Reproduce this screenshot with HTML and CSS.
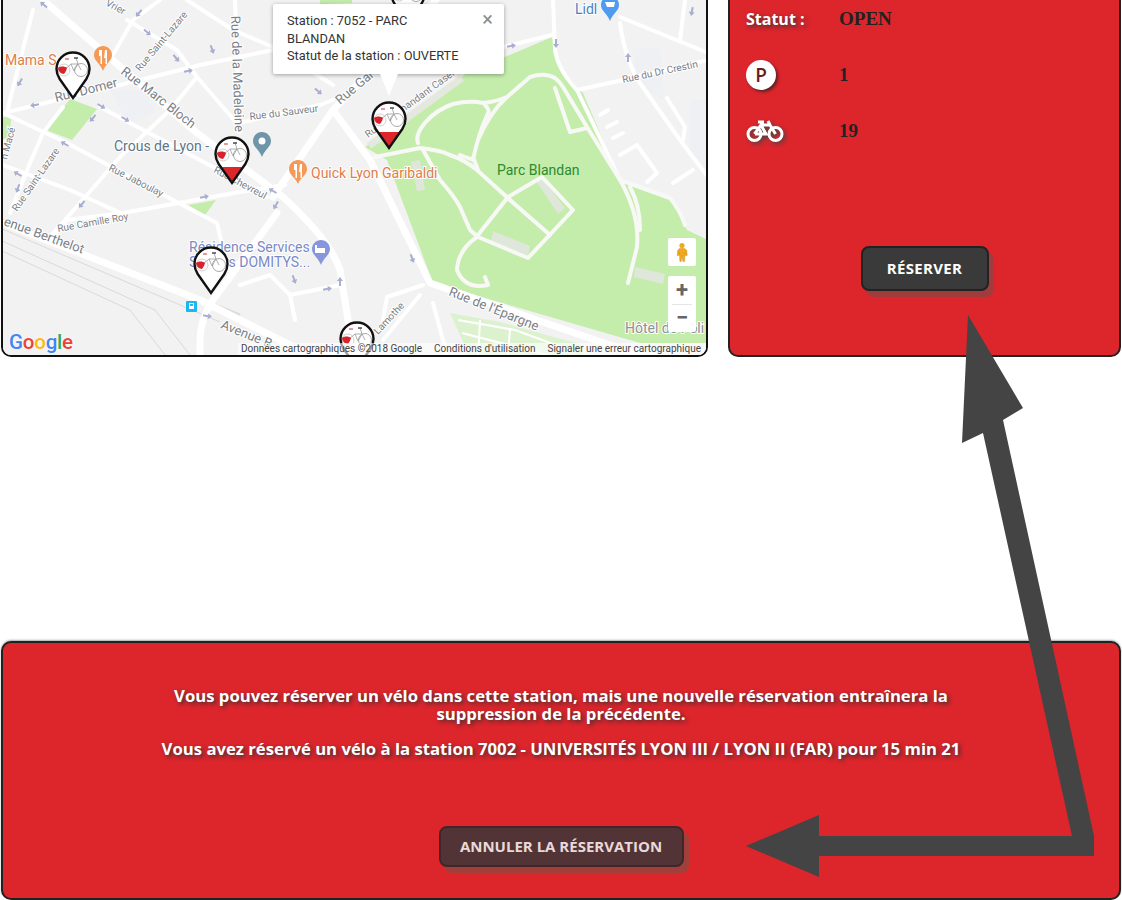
FILE: index.html
```html
<!DOCTYPE html>
<html lang="fr">
<head>
  <meta charset="UTF-8">
  <meta name="viewport" content="width=device-width, initial-scale=1.0">
  <title>Réservation de vélo</title>
  <link rel="stylesheet" href="styles.css">
</head>
<body>
  <div class="page">
    <div class="top">
      <div class="map">
        <svg class="map-canvas" viewBox="3 0 705 355" width="705" height="355">
          <defs>
            <polygon id="dir" points="-4,-1 1,-1 1,-3 5,0 1,3 1,1 -4,1"/>
            <g id="pin">
              <path d="M18 1.500C8.800 1.500 1.500 8.800 1.500 18c0 4 1.300 7 3.200 10L18 47l13.300-19c1.900-3 3.200-6 3.200-10C34.500 8.800 27.200 1.500 18 1.500z" fill="#fff"/>
              <circle cx="9" cy="19" r="6" fill="none" stroke="#d0d0d0"/>
              <circle cx="26" cy="19" r="6.500" fill="none" stroke="#a9a9a9"/>
              <path d="M9 19l7-6 7 0 3 6M16 13l3 7 4-7M21 7l2 6" fill="none" stroke="#9a9a9a" stroke-width=".8"/>
              <path d="M19 7h4" stroke="#222" stroke-width="1.200"/>
              <path d="M10 8h4" stroke="#c33" stroke-width="1"/>
              <path d="M3 17c2-2 7-2 9 0l-1 3-2 3c-3 0-6-3-6-6z" fill="#d8232c"/>
            </g>
            <g id="pin-line">
              <path d="M18 1.500C8.800 1.500 1.500 8.800 1.500 18c0 4 1.300 7 3.200 10L18 47l13.300-19c1.900-3 3.200-6 3.200-10C34.500 8.800 27.200 1.500 18 1.500z" fill="none" stroke="#111" stroke-width="2.400"/>
            </g>
          </defs>

          <rect x="0" y="0" width="710" height="355" fill="#f2f2f2"/>

          <!-- espaces verts -->
          <polygon class="park" points="365,147 467,73 552,37 563,73 583,93 620,180 670,197 687,230 708,240 708,343 640,343 433,283 387,160"/>
          <polygon class="park-light" points="450,313 500,322 583,345 583,357 470,357"/>
          <polygon class="park" points="46,130 70,99 97,109 72,140"/>
          <polygon class="park" points="0,118 12,116 8,138 0,140"/>
          <polygon class="park" points="188,205 216,200 205,215"/>
          <polygon class="park" points="320,0 352,0 352,3 320,4"/>
          <polygon class="block" points="110,90 145,90 155,112 130,125"/>
          <polygon class="block" points="632,48 660,48 664,100 640,85"/>
          <polygon class="block" points="690,100 708,100 708,170 690,155"/>
          <polygon class="building" points="536,181 543,179 565,208 558,214"/>
          <polygon class="building" points="493,231 530,246 528,256 491,241"/>
          <polygon class="building" points="635,267 665,274 663,284 634,277"/>
          <polygon class="building" points="411,162 420,160 425,190 417,191"/>
          <path class="band" d="M369 146L462 78"/>

          <!-- voie ferree -->
          <path class="rail" d="M0 228L220 322M0 240L155 310L190 355M0 250L130 310L165 355"/>
          <path class="rail-band" d="M0 219L240 315"/>

          <!-- rues -->
          <g class="road-wide">
            <path d="M43 0L197 133L283 197Q330 240 340 270L354 357"/>
            <path d="M3 223L200 300L300 350L340 357"/>
            <path d="M333 110L370 160L430 283L537 320L633 353L660 357"/>
            <path d="M273 197L333 110L352 90L415 25L436 0"/>
            <path d="M277 213L213 300Q200 320 200 340L200 357"/>
          </g>
          <g class="road">
            <path d="M3 113L120 85L200 65L273 50L352 40"/>
            <path d="M235 0L240 132"/>
            <path d="M100 107L213 167L267 197"/>
            <path d="M3 113L67 143L173 200L217 223L224 253L230 270"/>
            <path d="M50 240L67 220L123 213L240 192L285 185"/>
            <path d="M3 165L70 190L125 215"/>
            <path d="M33 10L10 100L7 113"/>
            <path d="M110 60L133 20L160 0"/>
            <path d="M63 107L43 133L30 163L10 213"/>
            <path d="M170 110L120 157L80 203L47 240"/>
            <path d="M197 77L170 110"/>
            <path d="M127 20L177 50L197 77L240 127"/>
            <path d="M187 0L233 30L273 47L333 85"/>
            <path d="M243 122L320 105L333 100"/>
            <path d="M240 285L270 275L290 295L295 320M290 295L340 285"/>
            <path d="M503 47L552 35"/>
            <path d="M553 0L555 50Q558 70 577 90L620 180"/>
            <path d="M577 90L623 80L708 60"/>
            <path d="M620 17L708 53"/>
            <path d="M620 23Q625 60 640 83L680 140L708 177"/>
            <path d="M600 115L608 110M607 127L617 122M613 138L623 133M620 155L637 145L657 173L647 182"/>
            <path d="M667 98L685 127L683 140M673 183L693 170"/>
            <path d="M423 285L387 297L383 320M433 303L447 355"/>
            <path d="M383 340L420 295"/>
            <path d="M685 0L680 40"/>
          </g>
          <g class="path">
            <path d="M418 143C414 132 430 112 453 104Q470 100 483 103Q495 102 507 97L530 77Q545 72 555 78Q560 82 563 87L587 127L620 180Q640 215 637 247L628 283"/>
            <path d="M375 157L420 148Q440 150 450 155Q465 160 477 170L510 200L550 235"/>
            <path d="M423 150L440 180Q455 197 460 207L470 230L478 237L528 258L573 210L542 177L508 197L478 235"/>
            <path d="M477 237Q458 250 457 270Q465 290 488 285L485 277"/>
            <path d="M485 105Q490 110 488 113Q478 135 473 160L460 155M507 97Q490 112 478 140M473 157L478 170"/>
            <path d="M555 88L570 132L587 128"/>
            <path d="M620 180L670 198Q680 210 685 225M630 187Q640 205 640 230"/>
          </g>
          <path class="lawn-grid" d="M458 320L515 330L575 352M462 333L555 357M480 320L478 357M510 328L508 357"/>

          <!-- sens de circulation -->
          <g class="dirs">
            <use href="#dir" transform="translate(44 5) rotate(220)"/>
            <use href="#dir" transform="translate(139 13) rotate(130)"/>
            <use href="#dir" transform="translate(147 32) rotate(40)"/>
            <use href="#dir" transform="translate(176 58) rotate(50)"/>
            <use href="#dir" transform="translate(188 71) rotate(-10)"/>
            <use href="#dir" transform="translate(212 49) rotate(70)"/>
            <use href="#dir" transform="translate(20 82) rotate(120)"/>
            <use href="#dir" transform="translate(35 105) rotate(170)"/>
            <use href="#dir" transform="translate(101 106) rotate(30)"/>
            <use href="#dir" transform="translate(125 119) rotate(30)"/>
            <use href="#dir" transform="translate(93 118) rotate(130)"/>
            <use href="#dir" transform="translate(65 144) rotate(210)"/>
            <use href="#dir" transform="translate(18 174) rotate(210)"/>
            <use href="#dir" transform="translate(18 188) rotate(110)"/>
            <use href="#dir" transform="translate(82 204) rotate(130)"/>
            <use href="#dir" transform="translate(204 197) rotate(-10)"/>
            <use href="#dir" transform="translate(273 191) rotate(210)"/>
            <use href="#dir" transform="translate(276 205) rotate(120)"/>
            <use href="#dir" transform="translate(207 316) rotate(10)"/>
            <use href="#dir" transform="translate(294 279) rotate(70)"/>
            <use href="#dir" transform="translate(327 289) rotate(-10)"/>
            <use href="#dir" transform="translate(340 282) rotate(-90)"/>
            <use href="#dir" transform="translate(412 258) rotate(70)"/>
            <use href="#dir" transform="translate(511 46) rotate(-10)"/>
            <use href="#dir" transform="translate(556 43) rotate(90)"/>
            <use href="#dir" transform="translate(628 58) rotate(-90)"/>
            <use href="#dir" transform="translate(692 11) rotate(100)"/>
            <use href="#dir" transform="translate(318 91) rotate(40)"/>
          </g>

          <!-- noms de rues -->
          <g class="label">
            <text transform="translate(56 102) rotate(-14)" class="street-big">Rue Domer</text>
            <text transform="translate(120 73) rotate(38)" class="street-big">Rue Marc Bloch</text>
            <text transform="translate(231 16) rotate(88)" class="street-big">Rue de la Madeleine</text>
            <text transform="translate(250 120) rotate(-7)">Rue du Sauveur</text>
            <text transform="translate(140 72) rotate(-50)">Rue Saint-Lazare</text>
            <text transform="translate(17 212) rotate(-55)">Rue Saint-Lazare</text>
            <text transform="translate(108 170) rotate(27)">Rue Jaboulay</text>
            <text transform="translate(58 232) rotate(-10)">Rue Camille Roy</text>
            <text transform="translate(213 172) rotate(28)">Rue Chevreul</text>
            <text transform="translate(3 225) rotate(20)" class="street-big">enue Berthelot</text>
            <text transform="translate(220 328) rotate(22)" class="street-big">Avenue B</text>
            <text transform="translate(448 295) rotate(22)" class="street-big">Rue de l'Épargne</text>
            <text transform="translate(378 335) rotate(-47)">Lamothe</text>
            <text transform="translate(340 105) rotate(-40)" class="street-big">Rue Gar</text>
            <text transform="translate(368 138) rotate(-36)">Rue Commandant Casernement</text>
            <text transform="translate(623 83) rotate(-12)">Rue du Dr Crestin</text>
            <text transform="translate(7 160) rotate(-75)">n Macé</text>
            <text transform="translate(105 5) rotate(28)">Vrier</text>
          </g>

          <text class="poi poi-food" x="5" y="65">Mama S</text>
          <text class="poi poi-grey" x="114" y="151">Crous de Lyon -</text>
          <text class="poi poi-food" x="311" y="178">Quick Lyon Garibaldi</text>
          <text class="poi poi-park" x="497" y="175">Parc Blandan</text>
          <text class="poi poi-hotel" x="189" y="252">Résidence Services</text>
          <text class="poi poi-hotel" x="189" y="267">Séniors DOMITYS...</text>
          <text class="poi poi-shop" x="575" y="14">Lidl</text>
          <text class="poi poi-grey2" x="625" y="333">Hôtel de Poli</text>

          <!-- icones de lieux -->
          <g>
            <path d="M103 46c-5 0-9 4-9 9 0 6 6 8 9 16 3-8 9-10 9-16 0-5-4-9-9-9z" fill="#f59a56"/>
            <path d="M99 50v6h1.500v8h1.500v-14M105 50h2v14h-1.500v-6h-1.500z" fill="#fff"/>
            <path d="M262 132c-5 0-9 4-9 9 0 6 6 8 9 16 3-8 9-10 9-16 0-5-4-9-9-9z" fill="#6f95a8"/>
            <circle cx="262" cy="141" r="3.500" fill="#fff"/>
            <path d="M298 160c-5 0-9 4-9 9 0 6 6 8 9 15 3-7 9-9 9-15 0-5-4-9-9-9z" fill="#f59a56"/>
            <path d="M294 164v6h1.500v8h1.500v-14M300 164h2v14h-1.500v-6h-1.500z" fill="#fff"/>
            <path d="M321 240c-5 0-9 4-9 9 0 6 6 8 9 16 3-8 9-10 9-16 0-5-4-9-9-9z" fill="#8796dc"/>
            <path d="M315 245h2v3h8v5h-10z" fill="#fff"/>
            <path d="M610 -4c-5 0-9 4-9 9 0 6 6 8 9 16 3-8 9-10 9-16 0-5-4-9-9-9z" fill="#4f9bf0"/>
            <path d="M605 2h10l-1 5h-7z" fill="#fff"/>
            <rect x="186" y="301" width="11" height="11" rx="1" fill="#1fb5f0"/>
            <rect x="189" y="303" width="5" height="6" fill="#fff"/>
            <rect x="190" y="304" width="3" height="2" fill="#1fb5f0"/>
          </g>

          <!-- stations -->
          <g>
            <use href="#pin" x="55" y="51"/><use href="#pin-line" x="55" y="51"/>
            <use href="#pin" x="214" y="136"/>
            <polygon points="222,167 242,167 232,184" fill="#dd252c"/>
            <use href="#pin-line" x="214" y="136"/>
            <use href="#pin" x="193" y="246"/><use href="#pin-line" x="193" y="246"/>
            <use href="#pin" x="371" y="101"/>
            <polygon points="378,132 400,132 389,149" fill="#dd252c"/>
            <use href="#pin-line" x="371" y="101"/>
            <use href="#pin" x="339" y="321"/><use href="#pin-line" x="339" y="321"/>
            <use href="#pin" x="390" y="-24"/><use href="#pin-line" x="390" y="-24"/>
          </g>
        </svg>

        <div class="popup">
          <span class="popup-close">×</span>
          <p>Station : 7052 - PARC BLANDAN<br>Statut de la station : OUVERTE</p>
        </div>

        <div class="pegman">
          <svg viewBox="0 0 14 22" width="12" height="20">
            <circle cx="7" cy="3.500" r="3" fill="#f0a91e"/>
            <path d="M4 7h6l2.500 2 .5 6h-2l-.5-4-.5 11H8l-1-7-1 7H4.500L4 11l-.5 4h-2L2 9z" fill="#f0a91e" stroke="#c98a10" stroke-width=".5"/>
          </svg>
        </div>
        <div class="zoom-box">
          <span class="zoom-btn">+</span>
          <span class="zoom-btn zoom-minus">−</span>
        </div>

        <div class="google"><span class="g-blue">G</span><span class="g-red">o</span><span class="g-yellow">o</span><span class="g-blue">g</span><span class="g-green">l</span><span class="g-red">e</span></div>
        <div class="attrib">
          <span>Données cartographiques ©2018 Google</span>
          <span>Conditions d'utilisation</span>
          <span>Signaler une erreur cartographique</span>
        </div>
      </div>

      <div class="panel">
        <div class="info-row">
          <span class="info-label">Statut :</span>
          <span class="info-value">OPEN</span>
        </div>
        <div class="info-row">
          <span class="info-label"><span class="park-icon">P</span></span>
          <span class="info-value">1</span>
        </div>
        <div class="info-row">
          <span class="info-label">
            <svg class="bike-icon" viewBox="0 0 38 24" width="38" height="24">
              <g fill="none" stroke="#fff" stroke-width="3">
                <circle cx="8.500" cy="15" r="6.500"/>
                <circle cx="29.500" cy="15" r="6.500"/>
                <path d="M8.500 15L15 6h9l5.500 9M15 6l5 9h-11M22 2l2 4M12 3h6"/>
              </g>
            </svg>
          </span>
          <span class="info-value">19</span>
        </div>
        <div class="panel-action">
          <button class="btn btn-book">RÉSERVER</button>
        </div>
      </div>
    </div>

    <div class="booking">
      <p class="booking-text">Vous pouvez réserver un vélo dans cette station, mais une nouvelle réservation entraînera la suppression de la précédente.</p>
      <p class="booking-text booking-current">Vous avez réservé un vélo à la station 7002 - UNIVERSITÉS LYON III / LYON II (FAR) pour 15 min 21</p>
      <button class="btn btn-cancel">ANNULER LA RÉSERVATION</button>
    </div>

    <svg class="arrow" viewBox="0 0 1122 900" width="1122" height="900">
      <polygon points="968,315 1023,408 1003,420 1094,836 1094,856 819,856 819,877 746,846 819,815 819,836 1072,836 983,433 962,443"/>
    </svg>
  </div>
</body>
</html>
```

FILE: styles.css
```css
html, body {
  margin: 0;
  padding: 0;
  background: #fff;
}
.page {
  position: relative;
  width: 1122px;
  height: 900px;
  overflow: hidden;
  font-family: "Open Sans", Arial, sans-serif;
}
.top {
  display: flex;
  gap: 20px;
  height: 357px;
  padding-left: 1px;
}

/* carte */
.map {
  position: relative;
  width: 707px;
  height: 357px;
  box-sizing: border-box;
  border: 2px solid #111;
  border-top: 0;
  border-radius: 0 0 10px 10px;
  overflow: hidden;
  font-family: Roboto, Arial, sans-serif;
}
.map-canvas {
  display: block;
}
.park { fill: #c4edac; }
.park-light { fill: #dcf2cf; }
.block { fill: #eef0f3; }
.building { fill: #dfe6da; }
.band { fill: none; stroke: #e4e8de; stroke-width: 7; }
.rail { fill: none; stroke: #d9d9d9; stroke-width: 1; }
.rail-band { fill: none; stroke: #dcdcdc; stroke-width: 3; }
.lawn-grid { fill: none; stroke: #fff; stroke-width: 2; }
.road-wide path, .road path, .path path {
  fill: none;
  stroke: #fff;
  stroke-linejoin: round;
  stroke-linecap: round;
}
.road-wide path { stroke-width: 7; }
.road path { stroke-width: 4; }
.path path { stroke: #f8f9f6; stroke-width: 4; }
.dirs { fill: #a9aed0; }
.label text {
  font-size: 10px;
  fill: #7a8087;
  stroke: #fff;
  stroke-width: 2px;
  paint-order: stroke;
}
.label .street-big { font-size: 13px; }
.poi {
  font-size: 14px;
  stroke: #fff;
  stroke-width: 2px;
  paint-order: stroke;
}
.poi-food { fill: #dd7d4a; }
.poi-grey { fill: #5f7484; }
.poi-grey2 { fill: #8a9199; }
.poi-park { fill: #2d8a30; stroke: none; }
.poi-hotel { fill: #7a89c4; }
.poi-shop { fill: #4a7fc4; }

.popup {
  position: absolute;
  left: 270px;
  top: 4px;
  width: 231px;
  height: 70px;
  box-sizing: border-box;
  padding: 8px 0 0 14px;
  background: #fff;
  border-radius: 2px;
  box-shadow: 0 1px 4px rgba(0, 0, 0, .35);
  color: #333;
  font-size: 12.800px;
  line-height: 17.500px;
}
.popup p {
  margin: 0;
  width: 176px;
}
.popup::after {
  content: "";
  position: absolute;
  left: 107px;
  top: 70px;
  border-left: 9px solid transparent;
  border-right: 9px solid transparent;
  border-top: 22px solid #fff;
}
.popup-close {
  position: absolute;
  right: 11px;
  top: 3px;
  color: #8c8c8c;
  font-size: 20px;
  line-height: 24px;
}
.pegman {
  position: absolute;
  left: 665px;
  top: 238px;
  width: 28px;
  height: 28px;
  display: flex;
  align-items: center;
  justify-content: center;
  background: #fff;
  border-radius: 2px;
}
.zoom-box {
  position: absolute;
  left: 665px;
  top: 276px;
  width: 28px;
  height: 56px;
  background: #fff;
  border-radius: 2px;
}
.zoom-btn {
  display: block;
  height: 28px;
  color: #666;
  font-size: 22px;
  font-weight: 700;
  line-height: 27px;
  text-align: center;
}
.zoom-minus {
  position: relative;
}
.zoom-minus::before {
  content: "";
  position: absolute;
  left: 4px;
  right: 4px;
  top: 0;
  border-top: 1px solid #e6e6e6;
}
.google {
  position: absolute;
  left: 6px;
  bottom: 0;
  font-size: 20.500px;
  font-weight: 500;
  line-height: 26px;
  letter-spacing: -.2px;
  text-shadow: 0 0 2px #fff;
}
.g-blue { color: #4285f4; }
.g-red { color: #ea4335; }
.g-yellow { color: #fbbc05; }
.g-green { color: #34a853; }
.attrib {
  position: absolute;
  left: 235px;
  right: 0;
  bottom: 0;
  height: 12px;
  padding: 0 5px 0 3px;
  display: flex;
  justify-content: space-between;
  background: rgba(255, 255, 255, .6);
  color: #444;
  font-size: 10px;
  line-height: 12px;
  white-space: nowrap;
}

/* panneau station */
.panel {
  width: 393px;
  height: 357px;
  box-sizing: border-box;
  padding: 0 16px;
  border: 2px solid #222;
  border-top: 0;
  border-radius: 0 0 10px 10px;
  background: #dd252c;
}
.info-row {
  display: flex;
  align-items: center;
  height: 56px;
}
.info-row:first-child {
  height: 38px;
  margin-bottom: 9px;
}
.info-label {
  display: flex;
  align-items: center;
  width: 93px;
  color: #fff;
  font-size: 16px;
  font-weight: 700;
  text-shadow: 2px 2px 4px #333;
}
.info-value {
  color: #222;
  font-family: "Liberation Serif", Georgia, serif;
  font-size: 19px;
  font-weight: 700;
}
.park-icon {
  display: flex;
  align-items: center;
  justify-content: center;
  width: 30px;
  height: 30px;
  border-radius: 50%;
  background: #fff;
  color: #6a1a20;
  font-size: 19px;
  font-weight: 600;
  text-shadow: none;
  box-shadow: 2px 2px 3px #5a2222;
}
.bike-icon {
  filter: drop-shadow(2px 2px 2px #444);
}
.panel-action {
  display: flex;
  justify-content: center;
  margin-top: 87px;
}
.btn {
  height: 45px;
  width: 128px;
  padding: 0 0 2px;
  border: 2px solid #222;
  border-radius: 8px;
  background: #3a3a3a;
  color: #fff;
  font-family: "Open Sans", Arial, sans-serif;
  font-size: 15px;
  font-weight: 700;
  box-shadow: 5px 6px 0 #a13c3c;
}
.btn-book {
  letter-spacing: .3px;
}

/* bas de page */
.booking {
  height: 259px;
  box-sizing: border-box;
  margin: 284px 1px 0 1px;
  padding-top: 44px;
  display: flex;
  flex-direction: column;
  align-items: center;
  border: 2px solid #222;
  border-radius: 10px;
  background: #dd252c;
  box-shadow: 0 -1px 2px #aaa;
}
.booking-text {
  width: 820px;
  margin: 0;
  color: #fff;
  font-size: 16.700px;
  font-weight: 700;
  line-height: 18px;
  text-align: center;
  text-shadow: 2px 2px 4px #333;
}
.booking-current {
  margin-top: 17px;
}
.btn-cancel {
  width: 245px;
  height: 41px;
  margin-top: 68px;
  border-color: #40262a;
  background: #533436;
  color: #e8dada;
  box-shadow: 5px 6px 0 #a1403a;
}

/* fleche d'annotation */
.arrow {
  position: absolute;
  left: 0;
  top: 0;
  fill: #444;
  pointer-events: none;
}
```
